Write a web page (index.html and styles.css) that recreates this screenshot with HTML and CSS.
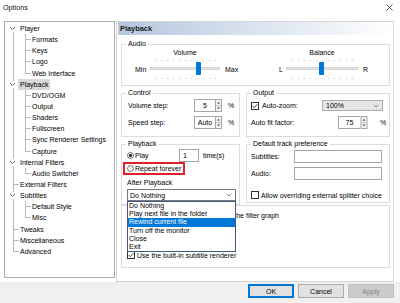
FILE: index.html
```html
<!DOCTYPE html>
<html>
<head>
<meta charset="utf-8">
<title>Options</title>
<link rel="stylesheet" href="styles.css">
</head>
<body>
<div class="win">
  <div class="titlebar">
    <span class="title">Options</span>
    <svg class="close" viewBox="0 0 7 7"><path d="M0.5 0.5 6.5 6.5M6.5 0.5 0.5 6.5" stroke="#333" stroke-width="0.8" fill="none"/></svg>
  </div>
  <div class="main">
    <div class="tree">
      <div class="row rp first"><svg class="chev" viewBox="0 0 7 5"><path d="M1 1 3.5 3.5 6 1" stroke="#555" stroke-width="0.9" fill="none"/></svg><span class="lbl">Player</span></div>
      <div class="row r1"><span class="lbl">Formats</span></div>
      <div class="row r1"><span class="lbl">Keys</span></div>
      <div class="row r1"><span class="lbl">Logo</span></div>
      <div class="row r1 last"><span class="lbl">Web Interface</span></div>
      <div class="row rp"><svg class="chev" viewBox="0 0 7 5"><path d="M1 1 3.5 3.5 6 1" stroke="#555" stroke-width="0.9" fill="none"/></svg><span class="lbl sel">Playback</span></div>
      <div class="row r1"><span class="lbl">DVD/OGM</span></div>
      <div class="row r1"><span class="lbl">Output</span></div>
      <div class="row r1"><span class="lbl">Shaders</span></div>
      <div class="row r1"><span class="lbl">Fullscreen</span></div>
      <div class="row r1"><span class="lbl">Sync Renderer Settings</span></div>
      <div class="row r1 last"><span class="lbl">Capture</span></div>
      <div class="row rp"><svg class="chev" viewBox="0 0 7 5"><path d="M1 1 3.5 3.5 6 1" stroke="#555" stroke-width="0.9" fill="none"/></svg><span class="lbl">Internal Filters</span></div>
      <div class="row r1 last"><span class="lbl">Audio Switcher</span></div>
      <div class="row r0"><span class="lbl">External Filters</span></div>
      <div class="row rp"><svg class="chev" viewBox="0 0 7 5"><path d="M1 1 3.5 3.5 6 1" stroke="#555" stroke-width="0.9" fill="none"/></svg><span class="lbl">Subtitles</span></div>
      <div class="row r1"><span class="lbl">Default Style</span></div>
      <div class="row r1 last"><span class="lbl">Misc</span></div>
      <div class="row r0"><span class="lbl">Tweaks</span></div>
      <div class="row r0"><span class="lbl">Miscellaneous</span></div>
      <div class="row r0 end"><span class="lbl">Advanced</span></div>
    </div>

    <div class="panel">
      <div class="phead">Playback</div>
      <div class="pbody">
        <fieldset class="grp audio">
          <legend>Audio</legend>
          <div class="audio-in">
            <div class="slblock vol">
              <span class="sl-title">Volume</span>
              <span class="sl-end">Min</span>
              <svg class="slider" viewBox="0 0 70 24">
                <rect x="0.5" y="10.5" width="69" height="2" fill="#e7e7e7" stroke="#d2d2d2"/>
                <g fill="#c4c4c4">
                  <rect x="5" y="3" width="1" height="1"/><rect x="11" y="3" width="1" height="1"/><rect x="17" y="3" width="1" height="1"/><rect x="23" y="3" width="1" height="1"/><rect x="29" y="3" width="1" height="1"/><rect x="35" y="3" width="1" height="1"/><rect x="41" y="3" width="1" height="1"/><rect x="47" y="3" width="1" height="1"/><rect x="53" y="3" width="1" height="1"/><rect x="59" y="3" width="1" height="1"/><rect x="65" y="3" width="1" height="1"/>
                  <rect x="5" y="21" width="1" height="1"/><rect x="11" y="21" width="1" height="1"/><rect x="17" y="21" width="1" height="1"/><rect x="23" y="21" width="1" height="1"/><rect x="29" y="21" width="1" height="1"/><rect x="35" y="21" width="1" height="1"/><rect x="41" y="21" width="1" height="1"/><rect x="47" y="21" width="1" height="1"/><rect x="53" y="21" width="1" height="1"/><rect x="59" y="21" width="1" height="1"/><rect x="65" y="21" width="1" height="1"/>
                </g>
                <rect x="46" y="5" width="5" height="13" rx="0.8" fill="#0078d7"/>
              </svg>
              <span class="sl-end2">Max</span>
            </div>
            <div class="slblock bal">
              <span class="sl-title">Balance</span>
              <span class="sl-end">L</span>
              <svg class="slider" viewBox="0 0 72 24">
                <rect x="0.5" y="10.5" width="71" height="2" fill="#e7e7e7" stroke="#d2d2d2"/>
                <g fill="#c4c4c4">
                  <rect x="6" y="3" width="1" height="1"/><rect x="12" y="3" width="1" height="1"/><rect x="18" y="3" width="1" height="1"/><rect x="24" y="3" width="1" height="1"/><rect x="30" y="3" width="1" height="1"/><rect x="36" y="3" width="1" height="1"/><rect x="42" y="3" width="1" height="1"/><rect x="48" y="3" width="1" height="1"/><rect x="54" y="3" width="1" height="1"/><rect x="60" y="3" width="1" height="1"/><rect x="66" y="3" width="1" height="1"/>
                  <rect x="6" y="21" width="1" height="1"/><rect x="12" y="21" width="1" height="1"/><rect x="18" y="21" width="1" height="1"/><rect x="24" y="21" width="1" height="1"/><rect x="30" y="21" width="1" height="1"/><rect x="36" y="21" width="1" height="1"/><rect x="42" y="21" width="1" height="1"/><rect x="48" y="21" width="1" height="1"/><rect x="54" y="21" width="1" height="1"/><rect x="60" y="21" width="1" height="1"/><rect x="66" y="21" width="1" height="1"/>
                </g>
                <rect x="33" y="5" width="5" height="13" rx="0.8" fill="#0078d7"/>
              </svg>
              <span class="sl-end2">R</span>
            </div>
          </div>
        </fieldset>

        <div class="cols">
          <fieldset class="grp control">
            <legend>Control</legend>
            <div class="ctl-in">
              <div class="frow">
                <span class="lbl-ctl">Volume step:</span>
                <div class="spin"><span class="field">5</span><svg class="arrows" viewBox="0 0 7 13"><rect x="0.5" y="0.5" width="6" height="12" fill="#f2f2f2" stroke="#a6a6a6"/><line x1="1" y1="6.5" x2="6" y2="6.5" stroke="#c8c8c8"/><path d="M2 4.6 3.5 3 5 4.6z M2 8.4 3.5 10 5 8.4z" fill="#333"/></svg></div>
                <span class="pct">%</span>
              </div>
              <div class="frow">
                <span class="lbl-ctl">Speed step:</span>
                <div class="spin"><span class="field">Auto</span><svg class="arrows" viewBox="0 0 7 13"><rect x="0.5" y="0.5" width="6" height="12" fill="#f2f2f2" stroke="#a6a6a6"/><line x1="1" y1="6.5" x2="6" y2="6.5" stroke="#c8c8c8"/><path d="M2 4.6 3.5 3 5 4.6z M2 8.4 3.5 10 5 8.4z" fill="#333"/></svg></div>
                <span class="pct">%</span>
              </div>
            </div>
          </fieldset>

          <fieldset class="grp output">
            <legend>Output</legend>
            <div class="out-in">
              <div class="frow">
                <svg class="chk" viewBox="0 0 8 8"><rect x="0.5" y="0.5" width="7" height="7" fill="#fff" stroke="#333"/><path d="M1.6 4 3.2 5.7 6.4 2.2" stroke="#333" stroke-width="0.9" fill="none"/></svg>
                <span class="lbl-az">Auto-zoom:</span>
                <div class="combo gray"><span>100%</span><svg class="cchev" viewBox="0 0 6 4"><path d="M0.8 0.8 3 3 5.2 0.8" stroke="#666" stroke-width="0.8" fill="none"/></svg></div>
              </div>
              <div class="frow">
                <span class="lbl-af">Auto fit factor:</span>
                <div class="spin wide"><span class="field">75</span><svg class="arrows" viewBox="0 0 7 13"><rect x="0.5" y="0.5" width="6" height="12" fill="#f2f2f2" stroke="#a6a6a6"/><line x1="1" y1="6.5" x2="6" y2="6.5" stroke="#c8c8c8"/><path d="M2 4.6 3.5 3 5 4.6z M2 8.4 3.5 10 5 8.4z" fill="#333"/></svg></div>
                <span class="pct far">%</span>
              </div>
            </div>
          </fieldset>

          <fieldset class="grp playback">
            <legend>Playback</legend>
            <div class="pb-in">
              <div class="frow">
                <svg class="radio" viewBox="0 0 8 8"><circle cx="4" cy="4" r="3.4" fill="#fff" stroke="#333" stroke-width="0.8"/><circle cx="4" cy="4" r="1.9" fill="#333"/></svg>
                <span class="lbl-play">Play</span>
                <span class="box1">1</span>
                <span class="times">time(s)</span>
              </div>
              <div class="frow repeat">
                <svg class="radio" viewBox="0 0 8 8"><circle cx="4" cy="4" r="3.4" fill="#fff" stroke="#333" stroke-width="0.8"/></svg>
                <span class="lbl-rep">Repeat forever</span>
              </div>
              <div class="after-lbl">After Playback</div>
              <div class="combo white dd">
                <span>Do Nothing</span>
                <svg class="cchev" viewBox="0 0 6 4"><path d="M0.8 0.8 3 3 5.2 0.8" stroke="#666" stroke-width="0.8" fill="none"/></svg>
                <ul class="ddlist">
                  <li>Do Nothing</li>
                  <li>Play next file in the folder</li>
                  <li class="hl">Rewind current file</li>
                  <li>Turn off the monitor</li>
                  <li>Close</li>
                  <li>Exit</li>
                </ul>
              </div>
            </div>
          </fieldset>

          <fieldset class="grp deftrack">
            <legend>Default track preference</legend>
            <div class="dt-in">
              <div class="frow first">
                <span class="lbl-dt">Subtitles:</span>
                <span class="edit"></span>
              </div>
              <div class="frow">
                <span class="lbl-dt">Audio:</span>
                <span class="edit"></span>
              </div>
              <div class="crow">
                <svg class="chk" viewBox="0 0 8 8"><rect x="0.5" y="0.5" width="7" height="7" fill="#fff" stroke="#333"/></svg>
                <span class="ctext">Allow overriding external splitter choice</span>
              </div>
            </div>
          </fieldset>
        </div>

        <fieldset class="grp misc">
          <div class="misc-in">
            <div class="crow"><svg class="chk" viewBox="0 0 8 8"><rect x="0.5" y="0.5" width="7" height="7" fill="#fff" stroke="#333"/></svg><span class="ctext">Use worker thread to construct the filter graph</span></div>
            <div class="crow"><svg class="chk" viewBox="0 0 8 8"><rect x="0.5" y="0.5" width="7" height="7" fill="#fff" stroke="#333"/></svg><span class="ctext">Remember file position</span></div>
            <div class="crow"><svg class="chk" viewBox="0 0 8 8"><rect x="0.5" y="0.5" width="7" height="7" fill="#fff" stroke="#333"/></svg><span class="ctext">Auto-load audio files</span></div>
            <div class="crow"><svg class="chk" viewBox="0 0 8 8"><rect x="0.5" y="0.5" width="7" height="7" fill="#fff" stroke="#333"/></svg><span class="ctext">Auto-load subtitles</span></div>
            <div class="crow"><svg class="chk" viewBox="0 0 8 8"><rect x="0.5" y="0.5" width="7" height="7" fill="#fff" stroke="#333"/><path d="M1.6 4 3.2 5.7 6.4 2.2" stroke="#333" stroke-width="0.9" fill="none"/></svg><span class="ctext">Use the built-in subtitle renderer</span></div>
          </div>
        </fieldset>
      </div>
    </div>
  </div>
  <div class="footer">
    <button class="btn ok">OK</button>
    <button class="btn">Cancel</button>
    <button class="btn dis">Apply</button>
  </div>
</div>
</body>
</html>
```

FILE: styles.css
```css
* { box-sizing: border-box; }
html, body { margin: 0; padding: 0; }
body {
  width: 400px; height: 303px; overflow: hidden;
  font-family: "Liberation Sans", Arial, sans-serif;
  font-size: 7px; color: #000; background: #fff;
}
.win { width: 400px; height: 303px; display: flex; flex-direction: column; background: #fff; }

/* title bar */
.titlebar { height: 21px; flex: none; display: flex; justify-content: space-between; align-items: flex-start; padding: 3px 7px 0 3px; }
.title { font-size: 7.2px; line-height: 9px; color: #111; }
.close { width: 7px; height: 7px; margin-top: 1px; }

/* main */
.main { display: flex; align-items: flex-start; gap: 1px; padding-left: 4px; height: 261px; flex: none; }

/* tree */
.tree { width: 111px; height: 257px; flex: none; border: 1px solid #ababab; background: #fff; padding-top: 1px; }
.row { height: 11.15px; display: flex; align-items: center; white-space: nowrap; background-repeat: no-repeat; }
.lbl { padding: 0 2px; line-height: 11px; }
.lbl.sel { background: #d9d9d9; }
.chev { width: 7px; height: 5px; margin-left: 4px; flex: none; }
.rp .lbl { margin-left: 2px; }
.r0 .lbl { margin-left: 13px; }
.r1 .lbl { margin-left: 25px; }

.r0 {
  background-image: linear-gradient(#b8b8b8, #b8b8b8), linear-gradient(#b8b8b8, #b8b8b8);
  background-position: 8px 0, 8px 5px;
  background-size: 1px 100%, 6px 1px;
}
.r0.end { background-size: 1px 6px, 6px 1px; }
.rp {
  background-image: linear-gradient(#b8b8b8, #b8b8b8), linear-gradient(#b8b8b8, #b8b8b8);
  background-position: 8px 0, 8px 9px;
  background-size: 1px 2px, 1px 3px;
}
.rp.first { background-image: linear-gradient(#b8b8b8, #b8b8b8); background-position: 8px 9px; background-size: 1px 3px; }
.r1 {
  background-image: linear-gradient(#b8b8b8, #b8b8b8), linear-gradient(#b8b8b8, #b8b8b8), linear-gradient(#b8b8b8, #b8b8b8);
  background-position: 8px 0, 20px 0, 20px 5px;
  background-size: 1px 100%, 1px 100%, 6px 1px;
}
.r1.last { background-size: 1px 100%, 1px 6px, 6px 1px; }

/* panel */
.panel { width: 278px; height: 261px; flex: none; border: 1px solid #d6d6d6; background: #fff; display: flex; flex-direction: column; }
.phead { height: 13px; flex: none; margin: 0 0 0 1px; padding-left: 2px; line-height: 13px; font-weight: bold; font-size: 7.4px; color: #1a1a1a;
  background: linear-gradient(to right, #b6c6dd 0%, #d6e0ee 45%, #ffffff 100%); }
.pbody { padding: 4px 3px 0 4px; display: flex; flex-direction: column; }

fieldset.grp { margin: 0; padding: 0; border: 1px solid #dcdcdc; min-width: 0; }
fieldset.grp legend { margin-left: 4px; padding: 0 2px; line-height: 10px; height: 10px; }

/* audio */
.audio-in { display: flex; justify-content: space-between; padding: 0 18px 4px 13px; }
.slblock { display: grid; grid-template-rows: 8px 24px; align-items: center; }
.vol { grid-template-columns: 15px 70px 5px auto; }
.bal { grid-template-columns: 7px 72px 5px 8px; }
.sl-title { grid-column: 2; grid-row: 1; text-align: center; line-height: 8px; }
.sl-end { grid-column: 1; grid-row: 2; }
.slider { grid-column: 2; grid-row: 2; width: 100%; height: 24px; display: block; }
.sl-end2 { grid-column: 4; grid-row: 2; }

/* grid of groups */
.cols { display: grid; grid-template-columns: 119px 144px; column-gap: 6px; row-gap: 2px; margin-top: 2px; align-items: start; }
.frow { display: flex; align-items: center; height: 13px; }
.frow + .frow { margin-top: 4px; }

.ctl-in { padding: 1px 0 7px 6px; }
.lbl-ctl { width: 66px; }
.spin { display: flex; height: 13px; }
.spin .field { width: 21px; height: 13px; border: 1px solid #a6a6a6; border-right: none; text-align: center; line-height: 11px; background: #fff; }
.spin.wide .field { width: 22px; }
.arrows { width: 7px; height: 13px; display: block; }
.spin.wide .arrows { width: 8px; }
.pct { margin-left: 6px; }
.pct.far { margin-left: 12px; }

.out-in { padding: 1px 0 7px 4px; }
.chk { width: 8px; height: 8px; flex: none; display: block; }
.lbl-az { width: 60px; margin-left: 3px; }
.lbl-af { width: 87px; }
.combo { position: relative; display: flex; align-items: center; justify-content: space-between; height: 11px; padding: 0 3px 0 3px; border: 1px solid #adadad; }
.combo.gray { width: 61px; background: #e6e6e6; }
.cchev { width: 6px; height: 4px; }

.pb-in { padding: 0 3px 3px 5px; }
.radio { width: 7px; height: 7px; flex: none; display: block; }
.lbl-play { width: 44px; margin-left: 1px; }
.box1 { width: 20px; height: 13px; border: 1px solid #a6a6a6; line-height: 11px; padding-left: 3px; }
.times { margin-left: 4px; }
.frow.repeat { display: inline-flex; margin: 0 0 0 -4px; height: 13px; border: 2px solid #e0202a; padding: 0 2px 0 2px; }
.lbl-rep { margin-left: 1px; }
.after-lbl { margin-top: 3px; line-height: 10px; }
.combo.white { margin-top: 1px; height: 12px; background: #fff; border-color: #7a7a7a; padding-left: 2px; }
.ddlist { position: absolute; left: -1px; right: -1px; top: 11px; height: 51px; margin: 0; padding: 0; list-style: none; background: #fff; border: 1px solid #3f5a86; z-index: 2; }
.ddlist li { height: 8.2px; line-height: 8.2px; padding-left: 1px; white-space: nowrap; }
.ddlist li.hl { background: #0078d7; color: #fff; }

.dt-in { padding: 0 0 2px 4px; }
.frow.first { margin-top: 1px; }
.lbl-dt { width: 43px; }
.edit { width: 88px; height: 13px; border: 1px solid #a6a6a6; background: #fff; }
.crow { display: flex; align-items: center; height: 10px; white-space: nowrap; }
.dt-in .crow { margin-top: 10px; }
.ctext { margin-left: 2px; }

.misc { margin-top: 7px; }
.misc-in { padding: 4px 0 7px 5px; }

/* footer */
.footer { flex: 1; background: #f0f0f0; display: flex; justify-content: flex-end; align-items: flex-start; gap: 4px; padding: 2px 6px 0 0; }
.btn { width: 46px; height: 14px; padding: 0; margin: 0; font-family: inherit; font-size: 7px; color: #000; background: #e1e1e1; border: 1px solid #adadad; }
.btn.ok { border: 1px solid #0078d7; box-shadow: inset 0 0 0 1px #0078d7; }
.btn.dis { background: #cccccc; border-color: #bfbfbf; color: #838383; }
```
